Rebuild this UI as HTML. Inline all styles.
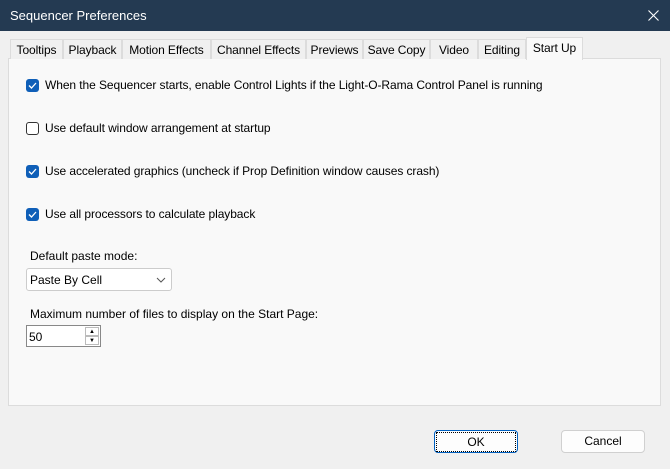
<!DOCTYPE html><html><head><style>
body{margin:0;width:670px;height:469px;background:#f0f0f0;font-family:"Liberation Sans",sans-serif;font-size:12px;color:#000;position:relative;overflow:hidden}
.a{position:absolute}
#title{left:0;top:0;width:670px;height:31px;background:#243a52;color:#fff}
.tab{position:absolute;top:39px;height:20px;line-height:20px;background:#f0f0f0;border:1px solid #dcdcdc;border-bottom:none;text-align:center;box-sizing:border-box;letter-spacing:-0.1px}
.cb{position:absolute;left:26px;width:13px;height:13px;border-radius:3px;box-sizing:border-box}
.on{background:#0f5fb8}
.off{border:1px solid #333;background:#fff}
.lbl{position:absolute;left:45px;letter-spacing:-0.08px}
.btn{position:absolute;top:430px;height:23px;line-height:21px;text-align:center;background:#fdfdfd;border:1px solid #d0d0d0;border-radius:4px;box-sizing:border-box}
</style></head><body>
<div class="a" id="title"><div class="a" style="left:10px;top:8px;font-size:13px">Sequencer Preferences</div><svg class="a" style="left:648px;top:10px" width="11" height="11"><path d="M0.5 0.5l10 10M10.5 0.5l-10 10" stroke="#fff" stroke-width="1.1"/></svg></div>
<div class="a" style="left:8px;top:58px;width:653px;height:348px;background:#f9f9f9;border:1px solid #dcdcdc;box-sizing:border-box"></div>
<div class="tab" style="left:10px;width:53px">Tooltips</div>
<div class="tab" style="left:63px;width:59px">Playback</div>
<div class="tab" style="left:122px;width:89px">Motion Effects</div>
<div class="tab" style="left:211px;width:95px">Channel Effects</div>
<div class="tab" style="left:306px;width:57px">Previews</div>
<div class="tab" style="left:363px;width:67px">Save Copy</div>
<div class="tab" style="left:430px;width:48px">Video</div>
<div class="tab" style="left:478px;width:48px">Editing</div>
<div class="tab" style="left:526px;top:37px;height:23px;width:57px;background:#f9f9f9;line-height:20px">Start Up</div>
<div class="cb on" style="top:79px"><svg width="13" height="13"><path d="M3 6.5l2.5 2.5 4.5-5" stroke="#fff" fill="none" stroke-width="1.3"/></svg></div>
<div class="lbl" style="top:78px">When the Sequencer starts, enable Control Lights if the Light-O-Rama Control Panel is running</div>
<div class="cb off" style="top:122px"></div>
<div class="lbl" style="top:121px">Use default window arrangement at startup</div>
<div class="cb on" style="top:165px"><svg width="13" height="13"><path d="M3 6.5l2.5 2.5 4.5-5" stroke="#fff" fill="none" stroke-width="1.3"/></svg></div>
<div class="lbl" style="top:164px">Use accelerated graphics (uncheck if Prop Definition window causes crash)</div>
<div class="cb on" style="top:208px"><svg width="13" height="13"><path d="M3 6.5l2.5 2.5 4.5-5" stroke="#fff" fill="none" stroke-width="1.3"/></svg></div>
<div class="lbl" style="top:207px">Use all processors to calculate playback</div>
<div class="a" style="left:30px;top:249px">Default paste mode:</div>
<div class="a" style="left:26px;top:268px;width:146px;height:23px;background:#fff;border:1px solid #ccc;border-radius:3px;box-sizing:border-box"><span class="a" style="left:3px;top:4px">Paste By Cell</span><svg class="a" style="left:129px;top:8px" width="10" height="6"><path d="M1 1l4 4 4-4" stroke="#555" fill="none"/></svg></div>
<div class="a" style="left:30px;top:307px">Maximum number of files to display on the Start Page:</div>
<div class="a" style="left:26px;top:325px;width:75px;height:22px;background:#fff;border:1px solid #888;box-sizing:border-box"><span class="a" style="left:2px;top:4px">50</span>
<div class="a" style="left:58px;top:1px;width:14px;height:9px;border:1px solid #bbb;box-sizing:border-box;font-size:6px;text-align:center;line-height:8px">▲</div>
<div class="a" style="left:58px;top:10px;width:14px;height:9px;border:1px solid #bbb;box-sizing:border-box;font-size:6px;text-align:center;line-height:8px">▼</div></div>
<div class="btn" style="left:434px;width:84px;border:1px solid #0060c0"><div style="border:1px dotted #000;margin:1px;line-height:18px">OK</div></div>
<div class="btn" style="left:561px;width:84px">Cancel</div>
</body></html>
